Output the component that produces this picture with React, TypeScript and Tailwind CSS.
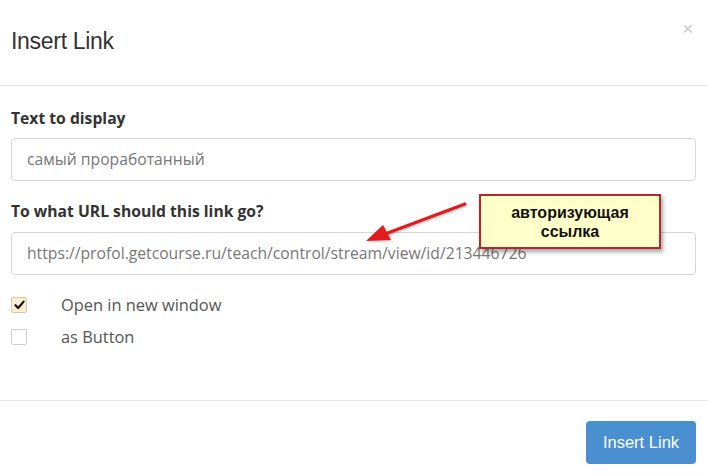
import React from "react";

export default function App() {
  return (
    <div className="relative w-[708px] h-[476px] bg-white overflow-hidden font-['Open_Sans',sans-serif]">
      {/* Header */}
      <div className="relative h-[86px] border-b border-[#e5e5e5] flex items-center pl-[11px]">
        <h1 className="font-['Liberation_Sans',sans-serif] text-[23px] text-[#333] tracking-[-0.3px] leading-none mt-[-2px]">
          Insert Link
        </h1>
        <span className="absolute right-[15px] top-[20px] text-[#c4c4c4] text-[18px] leading-none font-['Liberation_Sans',sans-serif]">
          ×
        </span>
      </div>

      {/* Body */}
      <div className="px-[11px] pt-[22px] h-[315px] border-b border-[#e5e5e5] flex flex-col">
        <label className="text-[15.7px] font-bold text-[#333] leading-[20px]">Text to display</label>
        <div className="mt-[10px] h-[43px] w-[685px] border border-[#d6d6d6] rounded-[4px] flex items-center pl-[15px] text-[15.7px] text-[#777]">
          самый проработанный
        </div>
        <label className="mt-[20px] text-[15.7px] font-bold text-[#333] leading-[20px]">
          To what URL should this link go?
        </label>
        <div className="mt-[11px] h-[43px] w-[685px] border border-[#d6d6d6] rounded-[4px] flex items-center pl-[15px] text-[15.7px] text-[#777]">
          https://profol.getcourse.ru/teach/control/stream/view/id/213446726
        </div>
        <div className="mt-[21px] flex items-center h-[18px]">
          <div className="w-[16px] h-[16px] border border-[#d8c9a8] bg-[#fbeed5] rounded-[2px] flex items-center justify-center">
            <svg width="11" height="10" viewBox="0 0 11 10">
              <path d="M1.5 5.2 L4.2 8 L9.6 1.6" fill="none" stroke="#111" strokeWidth="2.2" strokeLinecap="round" strokeLinejoin="round" />
            </svg>
          </div>
          <span className="ml-[34px] text-[16.4px] text-[#555]">Open in new window</span>
        </div>
        <div className="mt-[14px] flex items-center h-[18px]">
          <div className="w-[16px] h-[16px] border border-[#cfcfcf] bg-white rounded-[2px]" />
          <span className="ml-[34px] text-[16.4px] text-[#555]">as Button</span>
        </div>
      </div>

      {/* Footer */}
      <div className="flex justify-end pr-[12px] pt-[20px]">
        <button className="w-[110px] h-[43px] rounded-[4px] bg-[#4a8fd0] text-white text-[16.5px] font-['Liberation_Sans',sans-serif]">
          Insert Link
        </button>
      </div>

      {/* Annotation arrow */}
      <svg className="absolute left-0 top-0 pointer-events-none" width="708" height="476">
        <defs>
          <filter id="sh" x="-20%" y="-20%" width="140%" height="140%">
            <feDropShadow dx="1" dy="1" stdDeviation="1" floodColor="#000" floodOpacity="0.25" />
          </filter>
        </defs>
        <g filter="url(#sh)">
          <line x1="465" y1="204" x2="385" y2="234" stroke="#e01b1b" strokeWidth="3" strokeLinecap="round" />
          <polygon points="366,241 383,225 391,240" fill="#e01b1b" />
        </g>
      </svg>

      {/* Callout */}
      <div className="absolute left-[479px] top-[194px] w-[182px] h-[55px] bg-[#ffffc9] border-2 border-[#b8262b] shadow-[2px_3px_4px_rgba(0,0,0,0.35)] flex flex-col items-center justify-center font-['Liberation_Sans',sans-serif] font-bold text-[16px] leading-[19px] text-[#111]">
        <span>авторизующая</span>
        <span>ссылка</span>
      </div>
    </div>
  );
}
